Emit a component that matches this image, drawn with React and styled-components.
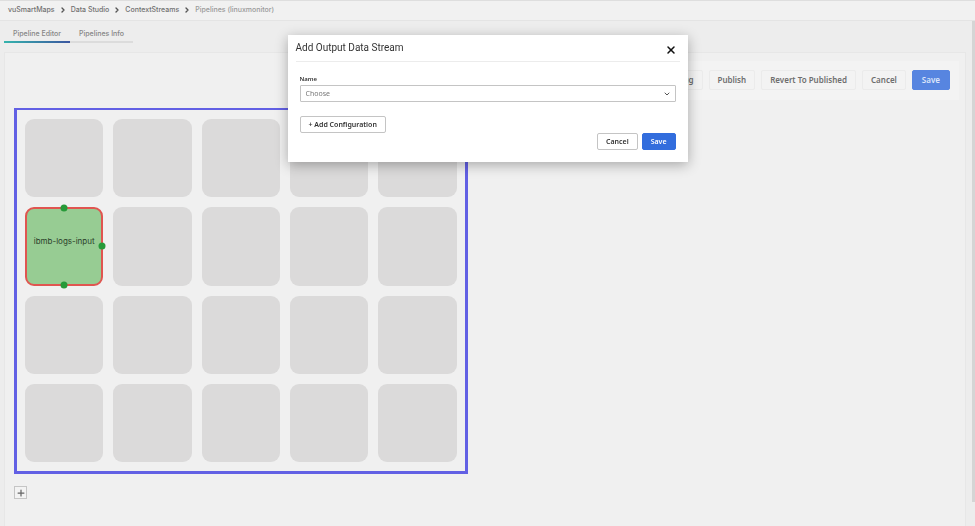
import * as React from "react"
import { useState } from "react"
import styled, { createGlobalStyle } from "styled-components"
import { ChevronDown, ChevronRight, Plus, X } from "lucide-react"

const GlobalStyle = createGlobalStyle`
  * {
    box-sizing: border-box;
  }
  body {
    margin: 0;
    background: #ededed;
    color: #333;
    font-family: "Noto Sans", "Open Sans", sans-serif;
    font-size: 8px;
    line-height: 12px;
  }
  button, select {
    font: inherit;
    color: inherit;
  }
`

const Page = styled.div`
  display: flex;
  flex-direction: column;
  min-height: 100vh;
  overflow: hidden;
`

const Breadcrumbs = styled.nav`
  display: flex;
  align-items: center;
  gap: 4px;
  height: 21px;
  padding: 0 8px 1px;
  background: #f1f1f1;
  border-top: 1px solid #dedede;
  border-bottom: 1px solid #e4e4e4;
  font-family: Inter, sans-serif;
  font-size: 7px;
  font-weight: 500;
  color: #777;

  >svg {
    color: #555;
  }
`

const Crumb = styled.a`
  color: ${({ $current }) => ($current ? "#999" : "#707070")};
  text-decoration: none;
  white-space: nowrap;
`

const Body = styled.div`
  display: flex;
  flex: 1;
`

const Main = styled.main`
  display: flex;
  flex-direction: column;
  flex: 1;
  padding: 0 6px 0 4px;
`

const ScrollTrack = styled.div`
  width: 3px;
  margin-bottom: 24px;
  background: #d5d5d5;
`

const Tabs = styled.div`
  display: flex;
  margin-bottom: 9px;
`

const Tab = styled.button`
  height: 22px;
  padding: 5px 9px 0;
  border: 0;
  border-bottom: 2px solid #dcdcdc;
  background: none;
  font-family: Inter, sans-serif;
  font-size: 7px;
  font-weight: 500;
  color: #858585;
  ${({ $active }) => $active && `
    border-image: linear-gradient(90deg, #35b5ad, #3c55a0) 1;
  `}
`

const Panel = styled.section`
  flex: 1;
  padding: 8px 6px 0 9px;
  background: #f0f0f0;
  border: 1px solid #e7e7e7;
  border-bottom: 0;
`

const Toolbar = styled.div`
  display: flex;
  justify-content: flex-end;
  gap: 6px;
  width: 50%;
  margin: 0 0 8px auto;
  padding: 9px 9px 10px;
  background: #f3f3f3;
`

const Button = styled.button`
  height: ${({ $large }) => ($large ? "20px" : "17px")};
  padding: 0 ${({ $large, $primary }) => ($large && $primary ? "9px" : "8px")};
  border: 1px solid #c4c4c4;
  border-radius: 2px;
  background: #fff;
  font-size: 7px;
  line-height: 10px;
  font-weight: 600;
  color: #333;
  white-space: nowrap;
  ${({ $muted }) => $muted && `
    border-color: #ebebeb;
    background: #f3f3f3;
    font-size: 8px;
    color: #6e6e6e;
  `}
  ${({ $primary, $muted }) => $primary && `
    border-color: ${$muted ? "#5785e0" : "#326ddd"};
    background: ${$muted ? "#5785e0" : "#326ddd"};
    color: ${$muted ? "#dce6fa" : "#fff"};
  `}
`

const Canvas = styled.div`
  display: grid;
  grid-template-columns: repeat(5, 1fr);
  gap: 10px;
  width: 48%;
  padding: 9px 8px;
  border: 3px solid #6260e4;
  border-top-width: 2px;
`

const Cell = styled.div`
  position: relative;
  display: flex;
  align-items: center;
  justify-content: center;
  aspect-ratio: 1;
  border-radius: 9px;
  background: #dbdada;
`

const Node = styled(Cell)`
  padding-bottom: 10px;
  border: 2px solid #e05550;
  background: #97cc93;
  font-family: Inter, sans-serif;
  color: #2b402a;
  white-space: nowrap;
`

const Port = styled.span`
  position: absolute;
  width: 7px;
  height: 7px;
  border-radius: 50%;
  background: #279a39;
  transform: translate(-50%, -50%);
  ${({ $side }) => ({
    top: "top: -1px; left: 50%;",
    right: "top: 50%; left: calc(100% + 1px);",
    bottom: "top: calc(100% + 1px); left: 50%;",
  })[$side]}
`

const AddButton = styled.button`
  display: flex;
  align-items: center;
  justify-content: center;
  width: 13px;
  height: 13px;
  margin-top: 12px;
  padding: 0;
  border: 1px solid #c5c5c5;
  background: #f3f3f3;
  color: #666;
`

const Overlay = styled.div`
  position: fixed;
  inset: 0;
  display: flex;
  align-items: flex-start;
  justify-content: center;
  padding-top: 35px;
`

const Dialog = styled.form`
  width: 400px;
  padding: 0 8px 12px;
  background: #fff;
  box-shadow: 0 3px 12px rgba(0, 0, 0, 0.3);
`

const DialogHeader = styled.header`
  display: flex;
  align-items: center;
  justify-content: space-between;
  height: 27px;
  border-bottom: 1px solid #ececec;

  >h1 {
    margin: 0;
    font-family: Roboto, sans-serif;
    font-size: 10px;
    line-height: 16px;
    font-weight: 400;
  }
`

const CloseButton = styled.button`
  display: flex;
  margin-top: 4px;
  padding: 3px;
  border: 0;
  background: none;
  color: #111;
`

const DialogBody = styled.div`
  padding: 11px 4px 0;
`

const Label = styled.label`
  display: block;
  font-size: 6px;
  font-weight: 600;
`

const SelectWrapper = styled.div`
  position: relative;
  margin-bottom: 14px;

  >svg {
    position: absolute;
    top: 5px;
    right: 5px;
    color: #555;
    pointer-events: none;
  }
`

const Select = styled.select`
  display: block;
  width: 100%;
  height: 17px;
  padding: 0 5px;
  appearance: none;
  border: 1px solid #c4c4c4;
  border-radius: 1px;
  background: #fff;
  font-size: 7px;
  color: #777;
`

const DialogFooter = styled.footer`
  display: flex;
  justify-content: flex-end;
  gap: 4px;
  padding: 0 4px;
`

const crumbs = ["vuSmartMaps", "Data Studio", "ContextStreams", "Pipelines (linuxmonitor)"]
const tabs = ["Pipeline Editor", "Pipelines Info"]
const actions = ["Debug", "Publish", "Revert To Published", "Cancel"]

// five columns by four rows, the input sits first in the second row
const cells = Array.from({ length: 20 }, (_, i) => (i === 5 ? "ibmb-logs-input" : null))

const OutputDialog = ({ onClose }) => (
  <Overlay>
    <Dialog role="dialog" aria-labelledby="dialog-title" onSubmit={e => e.preventDefault()}>
      <DialogHeader>
        <h1 id="dialog-title">Add Output Data Stream</h1>
        <CloseButton type="button" aria-label="Close" onClick={onClose}>
          <X size={12} strokeWidth={3} />
        </CloseButton>
      </DialogHeader>
      <DialogBody>
        <Label htmlFor="stream-name">Name</Label>
        <SelectWrapper>
          <Select id="stream-name" defaultValue="">
            <option value="">Choose</option>
          </Select>
          <ChevronDown size={8} strokeWidth={3} />
        </SelectWrapper>
        <Button type="button">+ Add Configuration</Button>
      </DialogBody>
      <DialogFooter>
        <Button type="button" onClick={onClose}>Cancel</Button>
        <Button type="submit" $primary>Save</Button>
      </DialogFooter>
    </Dialog>
  </Overlay>
)

const App = () => {
  const [open, setOpen] = useState(true)
  const [tab, setTab] = useState(tabs[0])

  return (
    <>
      <GlobalStyle />
      <Page>
        <Breadcrumbs aria-label="Breadcrumb">
          {crumbs.map((crumb, i) => (
            <React.Fragment key={crumb}>
              {i > 0 && <ChevronRight size={8} strokeWidth={4} />}
              <Crumb href="#" $current={i === crumbs.length - 1}>{crumb}</Crumb>
            </React.Fragment>
          ))}
        </Breadcrumbs>
        <Body>
          <Main>
            <Tabs>
              {tabs.map(name => (
                <Tab key={name} $active={name === tab} onClick={() => setTab(name)}>{name}</Tab>
              ))}
            </Tabs>
            <Panel>
              <Toolbar>
                {actions.map(action => (
                  <Button key={action} $muted $large>{action}</Button>
                ))}
                <Button $muted $large $primary>Save</Button>
              </Toolbar>
              <Canvas>
                {cells.map((name, i) => name ? (
                  <Node key={i}>
                    {name}
                    <Port $side="top" />
                    <Port $side="right" />
                    <Port $side="bottom" />
                  </Node>
                ) : <Cell key={i} />)}
              </Canvas>
              <AddButton aria-label="Add row" onClick={() => setOpen(true)}>
                <Plus size={10} strokeWidth={3} />
              </AddButton>
            </Panel>
          </Main>
          <ScrollTrack />
        </Body>
      </Page>
      {open && <OutputDialog onClose={() => setOpen(false)} />}
    </>
  )
}

export default App
